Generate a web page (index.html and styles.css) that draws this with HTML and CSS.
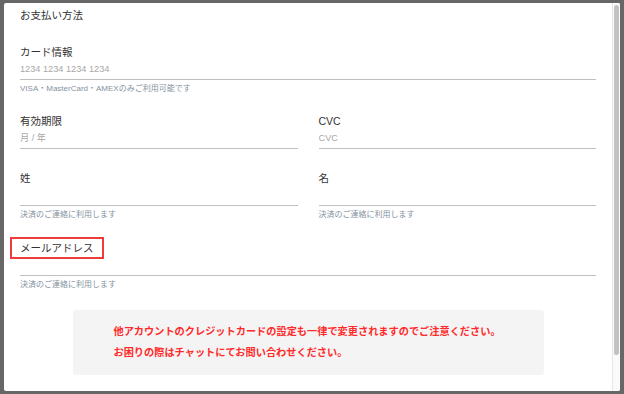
FILE: index.html
```html
<!DOCTYPE html>
<html lang="ja">
<head>
    <meta charset="UTF-8">
    <meta name="viewport" content="width=device-width, initial-scale=1.0">
    <title>お支払い方法</title>
    <link rel="stylesheet" href="styles.css">
</head>
<body>
    <div class="overlay">
        <div class="modal">
            <div class="modal-body">
                <h2 class="modal-title">お支払い方法</h2>

                <div class="field">
                    <label class="field-label">カード情報</label>
                    <input class="field-input" type="text" placeholder="1234 1234 1234 1234">
                    <p class="field-help">VISA・MasterCard・AMEXのみご利用可能です</p>
                </div>

                <div class="field-row field-row--nohelp">
                    <div class="field">
                        <label class="field-label">有効期限</label>
                        <input class="field-input" type="text" placeholder="月 / 年">
                    </div>
                    <div class="field">
                        <label class="field-label">CVC</label>
                        <input class="field-input" type="text" placeholder="CVC">
                    </div>
                </div>

                <div class="field-row">
                    <div class="field">
                        <label class="field-label">姓</label>
                        <input class="field-input" type="text">
                        <p class="field-help">決済のご連絡に利用します</p>
                    </div>
                    <div class="field">
                        <label class="field-label">名</label>
                        <input class="field-input" type="text">
                        <p class="field-help">決済のご連絡に利用します</p>
                    </div>
                </div>

                <div class="field">
                    <label class="field-label is-marked">メールアドレス</label>
                    <input class="field-input" type="email">
                    <p class="field-help">決済のご連絡に利用します</p>
                </div>

                <div class="notice">
                    <p>他アカウントのクレジットカードの設定も一律で変更されますのでご注意ください。</p>
                    <p>お困りの際はチャットにてお問い合わせください。</p>
                </div>
            </div>
            <div class="scrollbar">
                <div class="scrollbar-thumb"></div>
            </div>
        </div>
    </div>
</body>
</html>
```

FILE: styles.css
```css
* {
    box-sizing: border-box;
}

body {
    margin: 0;
    background-color: #676767;
    font-family: "Liberation Sans", "Noto Sans CJK JP", sans-serif;
    color: #333;
}

.overlay {
    padding: 3px 4px;
}

.modal {
    display: flex;
    width: 616px;
    height: 388px;
    background-color: #ffffff;
    border-radius: 2px;
    overflow: hidden;
}

.modal-body {
    flex: 1;
    padding: 3px 16px 0 16px;
}

.modal-title {
    margin: 0 0 19px;
    font-size: 10.5px;
    font-weight: normal;
    line-height: 18px;
    color: #333;
}

.field {
    margin-bottom: 16px;
}

.field-label {
    display: block;
    font-size: 10.5px;
    line-height: 18px;
    color: #333;
}

.field-label.is-marked {
    display: inline-block;
    padding: 0 8px;
    margin-left: -8px;
    outline: 2px solid #ee3b3b;
}

.field-input {
    display: block;
    width: 100%;
    height: 19px;
    padding: 0 0 2px;
    border: none;
    border-bottom: 1px solid #c0c0c0;
    background: transparent;
    font-family: inherit;
    font-size: 9.2px;
    color: #333;
    outline: none;
}

.field-input::placeholder {
    color: #a8a8a8;
}

.field-help {
    margin: 2px 0 0;
    font-size: 8px;
    line-height: 14px;
    color: #8592a0;
}

.field-row {
    display: grid;
    grid-template-columns: 1fr 1fr;
    column-gap: 21px;
}

.field-row--nohelp .field {
    margin-bottom: 20px;
}

.notice {
    width: 471px;
    margin: 18px auto 0;
    padding: 11px 0 12px 41px;
    background-color: #f4f4f4;
    border-radius: 3px;
}

.notice p {
    margin: 0;
    font-size: 10.2px;
    font-weight: bold;
    line-height: 21px;
    color: #ff2a2a;
}

.scrollbar {
    width: 8px;
    padding: 2px 1px 0;
    background-color: #fafafa;
    border-left: 1px solid #e6e6e6;
}

.scrollbar-thumb {
    height: 350px;
    background-color: #c2c2c2;
    border-radius: 3px;
}
```
